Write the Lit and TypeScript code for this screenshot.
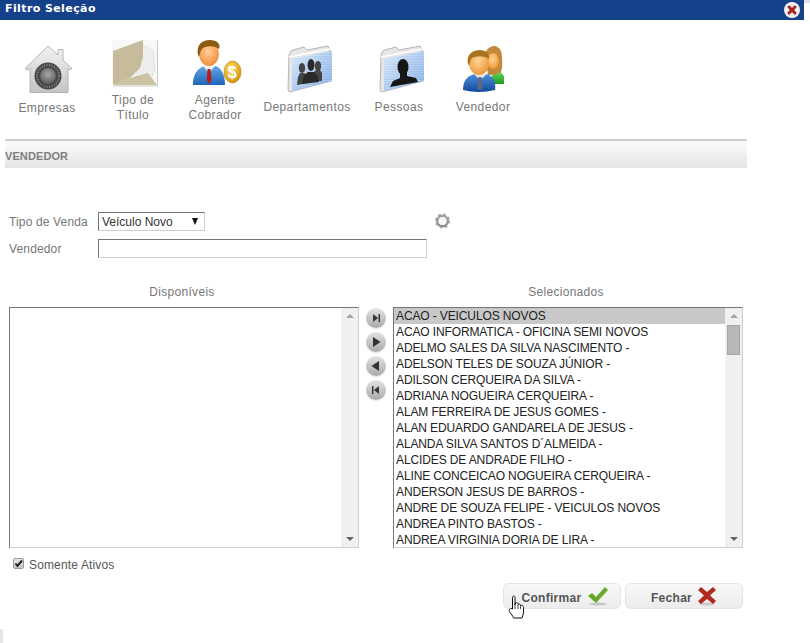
import { LitElement, html, css, svg } from 'lit';
import { customElement } from 'lit/decorators.js';

const SELECTED = [
  'ACAO - VEICULOS NOVOS',
  'ACAO INFORMATICA - OFICINA SEMI NOVOS',
  'ADELMO SALES DA SILVA NASCIMENTO -',
  'ADELSON TELES DE SOUZA JÚNIOR -',
  'ADILSON CERQUEIRA DA SILVA -',
  'ADRIANA NOGUEIRA CERQUEIRA -',
  'ALAM FERREIRA DE JESUS GOMES -',
  'ALAN EDUARDO GANDARELA DE JESUS -',
  'ALANDA SILVA SANTOS D´ALMEIDA -',
  'ALCIDES DE ANDRADE FILHO -',
  'ALINE CONCEICAO NOGUEIRA CERQUEIRA -',
  'ANDERSON JESUS DE BARROS -',
  'ANDRE DE SOUZA FELIPE - VEICULOS NOVOS',
  'ANDREA PINTO BASTOS -',
  'ANDREA VIRGINIA DORIA DE LIRA -',
];

const lockIcon = svg`<svg width="52" height="50" viewBox="0 0 52 50">
  <defs>
    <linearGradient id="house" x1="0" y1="0" x2="0" y2="1"><stop offset="0" stop-color="#f2f2f2"/><stop offset="1" stop-color="#c4c4c4"/></linearGradient>
    <radialGradient id="dial" cx=".5" cy=".4" r=".6"><stop offset="0" stop-color="#a8a8a8"/><stop offset="1" stop-color="#5c5c5c"/></radialGradient>
  </defs>
  <path d="M27 1L37 10V4.500H42V15L51 23.500L49 25L47 23.500V47.500H9V23.500L6 25L4 23.500Z" fill="url(#house)" stroke="#a6a6a6" stroke-width=".8"/>
  <circle cx="27" cy="31" r="13.500" fill="#474747"/>
  <circle cx="27" cy="31" r="11" fill="none" stroke="#8a8a8a" stroke-width="2" stroke-dasharray="1 1.500"/>
  <circle cx="27" cy="31" r="8" fill="url(#dial)"/>
</svg>`;

const titleIcon = svg`<svg width="48" height="48" viewBox="0 0 48 48">
  <rect x="1" y="1" width="46" height="46" fill="#f8f8f7"/>
  <path d="M46.500 1V47H2" fill="none" stroke="#c9c9c9"/>
  <path d="M32 6L42 11L44 29L41 38L24 39Z" fill="#eeeeec" stroke="#cfcfcb" stroke-width=".5"/>
  <path d="M37 34L46 46H2L19 39Z" fill="#cbc2a4"/>
  <path d="M2 12L32 1V18L29 29L19 39L2 46Z" fill="#c6bb9a"/>
</svg>`;

const agentIcon = svg`<svg width="50" height="48" viewBox="0 0 50 48">
  <defs>
    <radialGradient id="skin" cx=".45" cy=".4" r=".65"><stop offset="0" stop-color="#ffd0a0"/><stop offset="1" stop-color="#f08a30"/></radialGradient>
    <linearGradient id="suit" x1="0" y1="0" x2="0" y2="1"><stop offset="0" stop-color="#62a8e6"/><stop offset="1" stop-color="#1f64b8"/></linearGradient>
    <radialGradient id="coin" cx=".4" cy=".35" r=".7"><stop offset="0" stop-color="#ffe36a"/><stop offset="1" stop-color="#d09008"/></radialGradient>
  </defs>
  <path d="M1 46C1 35 5 30 12 27L17 28L24 27C30 30 33 36 33 46Z" fill="url(#suit)"/>
  <path d="M11 27L17 34L23 27L17 25Z" fill="#f4f4f4"/>
  <path d="M15.500 30H18.500L19.500 41L17 45L14.800 41Z" fill="#c01818"/>
  <ellipse cx="17" cy="15" rx="10" ry="12" fill="url(#skin)"/>
  <path d="M6 16C4 6 10 1 18 1C25 1 29 5 27 10C22 6 12 7 10 10C8 12 8 15 7 18Z" fill="#8c5a10"/>
  <ellipse cx="40.500" cy="33" rx="8.500" ry="11" fill="url(#coin)" stroke="#b88006" stroke-width=".6"/>
  <text x="40.500" y="39" text-anchor="middle" class="coin">$</text>
</svg>`;

const folder = (people: unknown) => svg`<svg width="46" height="48" viewBox="0 0 46 48">
  <defs>
    <linearGradient id="fblue" x1="0" y1="0" x2="1" y2="1"><stop offset="0" stop-color="#d5e6fa"/><stop offset="1" stop-color="#7ea9e2"/></linearGradient>
    <pattern id="lines" width="4" height="2.500" patternUnits="userSpaceOnUse"><rect width="4" height="1" fill="#ffffff" fill-opacity=".28"/></pattern>
  </defs>
  <path d="M2 10Q3 5 6 5L17 2L20 5L41 1L43 5L44 36L3 47Q1 47 1 44Z" fill="#e6e6e6" stroke="#9a9a9a" stroke-width=".7"/>
  <path d="M2 12L43 4" stroke="#ffffff" stroke-width="1.500"/>
  <path d="M5 14L45 6V36L5 46Z" fill="url(#fblue)"/>
  <path d="M5 14L45 6V36L5 46Z" fill="url(#lines)"/>
  ${people}
</svg>`;

const groupIcon = folder(svg`
  <g fill="#444">
    <ellipse cx="31" cy="21" rx="3.200" ry="5"/><path d="M25 36L26 28L29 25H33L35 28V36Z"/>
    <ellipse cx="15" cy="23" rx="3.200" ry="5"/><path d="M10 40L11 32L13 28H17L21 31V38Z"/>
  </g>
  <g fill="#2a2a2a">
    <ellipse cx="24" cy="20" rx="3.500" ry="6"/><path d="M15 39L17 30L21 27H27L30 30L32 37Z"/>
  </g>`);

const personIcon = folder(svg`
  <g fill="#161616">
    <ellipse cx="24" cy="22" rx="5.500" ry="8"/>
    <path d="M11 42L14 36L21 33V27H28V31L37 33L39 37Z"/>
  </g>`);

const sellerIcon = svg`<svg width="44" height="46" viewBox="0 0 44 46">
  <defs>
    <radialGradient id="skin2" cx=".45" cy=".4" r=".65"><stop offset="0" stop-color="#ffd49a"/><stop offset="1" stop-color="#ec9430"/></radialGradient>
    <linearGradient id="suit2" x1="0" y1="0" x2="0" y2="1"><stop offset="0" stop-color="#4e8fd8"/><stop offset="1" stop-color="#12489c"/></linearGradient>
    <linearGradient id="green" x1="0" y1="0" x2="0" y2="1"><stop offset="0" stop-color="#70e060"/><stop offset="1" stop-color="#189820"/></linearGradient>
  </defs>
  <path d="M28 34L32 26L38 25L42 30V38H28Z" fill="url(#green)"/>
  <path d="M23 9C24 2 29 0 33 0C38 1 40 6 40 11C40 16 41 21 39 26L33 29H26Z" fill="#c08a38"/>
  <ellipse cx="31" cy="15" rx="6" ry="8" fill="url(#skin2)"/>
  <path d="M1 44C1 33 6 30 13 28L25 28C32 31 34 36 33 44Q17 48 1 44Z" fill="url(#suit2)"/>
  <path d="M12 28L18 34L25 28L18 25Z" fill="#e8e8e8"/>
  <path d="M16.500 31H19.500L20.500 42L18 45L15.500 42Z" fill="#5a6a80"/>
  <ellipse cx="17" cy="17" rx="10" ry="12" fill="url(#skin2)"/>
  <path d="M6 18C4 9 10 4 18 4C24 4 28 8 27 13C22 9 13 10 10 12C8 14 8 16 7 20Z" fill="#a87420"/>
</svg>`;

const TOOLS = [
  { label: ['Empresas'], icon: lockIcon },
  { label: ['Tipo de', 'Título'], icon: titleIcon },
  { label: ['Agente', 'Cobrador'], icon: agentIcon },
  { label: ['Departamentos'], icon: groupIcon },
  { label: ['Pessoas'], icon: personIcon },
  { label: ['Vendedor'], icon: sellerIcon },
];

const NAV = [
  'M7 6L12 10L7 14ZM12.500 6H14V14H12.500Z',
  'M7 5L14.500 10L7 15Z',
  'M13 5V15L5.500 10Z',
  'M13 6V14L8 10ZM6 6H7.500V14H6Z',
];

@customElement('app-root')
export class AppRoot extends LitElement {
  static styles = css`
    :host {
      display: block;
      position: relative;
      width: 810px;
      height: 643px;
      overflow: hidden;
      background: #fff;
      font-family: 'Liberation Sans', Arial, sans-serif;
      font-size: 12px;
      color: #777;
    }
    .titlebar {
      width: 804px;
      height: 20px;
      box-sizing: border-box;
      padding: 0 5px;
      display: flex;
      align-items: center;
      justify-content: space-between;
      background: #15408a;
      color: #fff;
      font-family: 'DejaVu Sans', sans-serif;
      font-weight: bold;
      font-size: 11px;
      letter-spacing: 0.4px;
      line-height: 18px;
    }
    .titlebar span {
      margin-top: -2px;
    }
    .close {
      display: block;
      transform: translateX(2px);
    }
    .corner-top {
      position: absolute;
      top: 0;
      right: 0;
      width: 6px;
      height: 3px;
      background: #dcdfe6;
    }
    .corner-bottom {
      position: absolute;
      left: 0;
      bottom: 0;
      width: 3px;
      height: 14px;
      background: #e6e6e6;
    }
    .toolbar {
      height: 119px;
      box-sizing: border-box;
      padding-left: 5px;
      display: grid;
      grid-template-columns: 84px 88px 76px 108px 76px 92px;
      align-items: start;
    }
    .tool {
      display: flex;
      flex-direction: column;
      align-items: center;
      text-align: center;
      letter-spacing: 0.4px;
      line-height: 15px;
      padding-top: 25px;
    }
    .tool.tall {
      padding-top: 19px;
    }
    .tool svg {
      display: block;
    }
    .tool:nth-child(2) svg,
    .tool:nth-child(3) svg {
      transform: translateX(2px);
    }
    .tool:nth-child(4) svg,
    .tool:nth-child(5) svg {
      transform: translateX(3px);
    }
    .tool:nth-child(6) svg {
      transform: translate(1px, 1px);
    }
    .tool .name {
      margin-top: 7px;
    }
    .tool.tall .name {
      margin-top: 6px;
    }
    .tool:nth-child(1) .name {
      margin-top: 6px;
    }
    .tool:nth-child(6) .name {
      margin-top: 9px;
    }
    .coin {
      font: bold 16px 'Liberation Sans', sans-serif;
      fill: #fff;
    }
    .section {
      width: 742px;
      height: 29px;
      margin-left: 5px;
      box-sizing: border-box;
      padding-top: 7px;
      border-top: 2px solid #cccccc;
      background: linear-gradient(#fbfbfb, #e4e4e4);
      font-weight: bold;
      font-size: 11px;
      letter-spacing: 0.1px;
      line-height: 16px;
      color: #808080;
    }
    .fields {
      display: grid;
      grid-template-columns: 89px 329px 15px;
      row-gap: 8px;
      padding: 44px 0 0 9px;
      align-items: center;
      letter-spacing: 0.15px;
    }
    .fields label {
      padding-top: 2px;
      line-height: 17px;
    }
    select,
    input[type='text'] {
      box-sizing: border-box;
      height: 19px;
      border-style: solid;
      border-width: 1px;
      border-color: #767676 #cfcfcf #cfcfcf #767676;
      border-radius: 0;
      background-color: #fff;
      font: 12px 'Liberation Sans', Arial, sans-serif;
      color: #333;
      margin: 0;
      outline: none;
    }
    select {
      width: 107px;
      padding: 0 0 0 3px;
      appearance: none;
    }
    .select-wrap {
      position: relative;
      height: 19px;
    }
    .select-wrap i {
      position: absolute;
      left: 94px;
      top: 6px;
      width: 0;
      height: 0;
      border-left: 3.500px solid transparent;
      border-right: 3.500px solid transparent;
      border-top: 7px solid #111;
    }
    input[type='text'] {
      width: 329px;
      display: block;
    }
    .gear {
      display: block;
      margin: -1px 0 0 8px;
    }
    .transfer {
      display: grid;
      grid-template-columns: 350px 34px 350px;
      padding: 26px 0 0 9px;
    }
    .head {
      text-align: center;
      letter-spacing: 0.3px;
      padding-top: 2px;
      line-height: 12px;
      padding-right: 4px;
      margin-bottom: 9px;
    }
    .listbox {
      box-sizing: border-box;
      height: 241px;
      display: flex;
      border-style: solid;
      border-width: 1px;
      border-color: #767676 #cfcfcf #cfcfcf #767676;
      color: #222;
      letter-spacing: -0.12px;
    }
    .rows {
      flex: 1;
      min-width: 0;
      overflow: hidden;
    }
    .row {
      height: 16px;
      line-height: 17px;
      padding-left: 2px;
      white-space: nowrap;
    }
    .row.on {
      background: #c8c8c8;
    }
    .scroll {
      width: 17px;
      display: flex;
      flex-direction: column;
      align-items: center;
      background: #f0f0f0;
      padding: 6px 0;
      box-sizing: border-box;
    }
    .scroll .up,
    .scroll .down {
      width: 0;
      height: 0;
      border-left: 4px solid transparent;
      border-right: 4px solid transparent;
    }
    .scroll .up {
      border-bottom: 4px solid #a4a4a4;
    }
    .scroll .down {
      border-top: 4px solid #666;
      margin-top: auto;
    }
    .scroll .thumb {
      width: 13px;
      height: 30px;
      box-sizing: border-box;
      margin-top: 7px;
      background: #b8b8b8;
      border: 1px solid #a6a6a6;
    }
    .nav {
      display: flex;
      flex-direction: column;
      align-items: center;
      gap: 4px;
      padding-top: 24px;
    }
    .nav button {
      width: 20px;
      height: 20px;
      padding: 0;
      border: none;
      border-radius: 50%;
      background: linear-gradient(#e4e4e4, #a9a9a9);
      box-shadow: 0 1px 1px #ddd;
    }
    .nav svg {
      display: block;
    }
    .active {
      display: flex;
      align-items: center;
      height: 14px;
      padding: 9px 0 0 13px;
      color: #555;
      letter-spacing: 0.15px;
    }
    .active .box {
      width: 11px;
      height: 11px;
      margin: 0 5px 2px 0;
      border: 1px solid #9a9a9a;
      border-radius: 2px;
      box-sizing: border-box;
      background: linear-gradient(#e8e8e8, #c8c8c8);
    }
    .active .box svg {
      display: block;
    }
    .active span {
      padding-top: 2px;
    }
    .actions {
      width: 743px;
      display: flex;
      justify-content: flex-end;
      gap: 4px;
      margin-top: 12px;
    }
    .actions button {
      width: 118px;
      height: 26px;
      padding: 0;
      display: flex;
      align-items: center;
      justify-content: center;
      gap: 5px;
      border: 1px solid #e4e4e4;
      border-radius: 6px;
      background: linear-gradient(#f8f8f8, #ececec);
      font: bold 12px 'Liberation Sans', Arial, sans-serif;
      letter-spacing: 0.3px;
      color: #555;
    }
    .actions button.confirm {
      padding-left: 6px;
    }
    .actions span {
      padding-top: 3px;
    }
    .actions svg {
      display: block;
    }
    .hand {
      position: absolute;
      left: 508px;
      top: 595px;
    }
  `;

  render() {
    return html`
      <div class="titlebar">
        <span>Filtro Seleção</span>
        <svg class="close" width="18" height="18" viewBox="0 0 18 18">
          <circle cx="9" cy="9" r="8" fill="#f2f0f0"/>
          <path d="M6 6L12 12M12 6L6 12" stroke="#a82020" stroke-width="3" stroke-linecap="round"/>
        </svg>
      </div>
      <div class="corner-top"></div>
      <div class="toolbar">
        ${TOOLS.map(
          (t) => html`<div class="tool ${t.label.length > 1 ? 'tall' : ''}">
            ${t.icon}
            <div class="name">${t.label.map((l) => html`<div>${l}</div>`)}</div>
          </div>`
        )}
      </div>
      <div class="section">VENDEDOR</div>
      <div class="fields">
        <label>Tipo de Venda</label>
        <div class="select-wrap">
          <select><option>Veículo Novo</option></select>
          <i></i>
        </div>
        <svg class="gear" width="15" height="16" viewBox="0 0 15 16">
          <defs>
            <linearGradient id="gearFill" x1="0" y1="0" x2="0" y2="1"><stop offset="0" stop-color="#a4a4a4"/><stop offset="1" stop-color="#8a8a8a"/></linearGradient>
          </defs>
          <circle cx="7.500" cy="8" r="5.300" fill="none" stroke="url(#gearFill)" stroke-width="2.400"/>
          <circle cx="7.500" cy="8" r="6.500" fill="none" stroke="#a0a0a0" stroke-width="2" stroke-dasharray="2.500 2.600"/>
          <circle cx="7.500" cy="8" r="3.700" fill="#f6f6f6"/>
        </svg>
        <label>Vendedor</label>
        <input type="text" />
      </div>
      <div class="transfer">
        <div>
          <div class="head">Disponíveis</div>
          <div class="listbox">
            <div class="rows"></div>
            <div class="scroll"><div class="up"></div><div class="down"></div></div>
          </div>
        </div>
        <div class="nav">
          ${NAV.map(
            (d) => html`<button>
              <svg width="20" height="20" viewBox="0 0 20 20"><path d=${d} fill="#333"/></svg>
            </button>`
          )}
        </div>
        <div>
          <div class="head">Selecionados</div>
          <div class="listbox">
            <div class="rows">
              ${SELECTED.map((s, i) => html`<div class="row ${i === 0 ? 'on' : ''}">${s}</div>`)}
            </div>
            <div class="scroll"><div class="up"></div><div class="thumb"></div><div class="down"></div></div>
          </div>
        </div>
      </div>
      <div class="active">
        <div class="box">
          <svg width="9" height="9" viewBox="0 0 9 9"><path d="M1.500 4.500L3.500 7L8 1.500" fill="none" stroke="#222" stroke-width="2"/></svg>
        </div>
        <span>Somente Ativos</span>
      </div>
      <div class="actions">
        <button class="confirm">
          <span>Confirmar</span>
          <svg width="22" height="20" viewBox="0 0 22 20">
            <ellipse cx="11" cy="18" rx="9" ry="1.500" fill="#c8c8c8"/>
            <path d="M1 10L5 7L9 11L18 1L21 4L9 17Z" fill="#68a828"/>
          </svg>
        </button>
        <button>
          <span>Fechar</span>
          <svg width="20" height="20" viewBox="0 0 20 20">
            <ellipse cx="10" cy="18" rx="8" ry="1.500" fill="#c8c8c8"/>
            <path d="M1 4L4 1L10 6L16 1L19 4L13 9.500L19 15L16 18L10 13L4 18L1 15L7 9.500Z" fill="#b02a20"/>
          </svg>
        </button>
      </div>
      <svg class="hand" width="18" height="24" viewBox="0 0 18 24">
        <path d="M4.500 14V2.500C4.500 .5 7 .5 7 2.500V10L7.500 8C9 7 10 8 10 9.500C11 8.500 12.500 9 12.500 10.500C13.500 10 15.500 10.500 15.500 12.500V17C15.500 19 14.500 21 14 23H5.500C5 21 3 19 1.500 16.500C.5 14.500 2.500 12.500 4.500 14Z" fill="#fff" stroke="#111" stroke-width="1"/>
        <path d="M7 10V14M10 10V14M12.500 11V14" stroke="#111" stroke-width=".8"/>
      </svg>
      <div class="corner-bottom"></div>
    `;
  }
}
